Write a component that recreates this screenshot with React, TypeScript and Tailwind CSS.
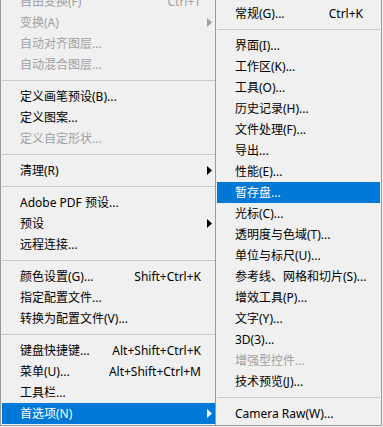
type Item = {
	label?: string;
	shortcut?: string;
	arrow?: boolean;
	disabled?: boolean;
	active?: boolean;
	sep?: boolean;
};

const leftItems: Array<Item> = [
	{ label: "自由变换(F)", shortcut: "Ctrl+T", disabled: true },
	{ label: "变换(A)", arrow: true, disabled: true },
	{ label: "自动对齐图层...", disabled: true },
	{ label: "自动混合图层...", disabled: true },
	{ sep: true },
	{ label: "定义画笔预设(B)..." },
	{ label: "定义图案..." },
	{ label: "定义自定形状...", disabled: true },
	{ sep: true },
	{ label: "清理(R)", arrow: true },
	{ sep: true },
	{ label: "Adobe PDF 预设..." },
	{ label: "预设", arrow: true },
	{ label: "远程连接..." },
	{ sep: true },
	{ label: "颜色设置(G)...", shortcut: "Shift+Ctrl+K" },
	{ label: "指定配置文件..." },
	{ label: "转换为配置文件(V)..." },
	{ sep: true },
	{ label: "键盘快捷键...", shortcut: "Alt+Shift+Ctrl+K" },
	{ label: "菜单(U)...", shortcut: "Alt+Shift+Ctrl+M" },
	{ label: "工具栏..." },
	{ label: "首选项(N)", arrow: true, active: true },
];

const subItems: Array<Item> = [
	{ label: "常规(G)...", shortcut: "Ctrl+K" },
	{ sep: true },
	{ label: "界面(I)..." },
	{ label: "工作区(K)..." },
	{ label: "工具(O)..." },
	{ label: "历史记录(H)..." },
	{ label: "文件处理(F)..." },
	{ label: "导出..." },
	{ label: "性能(E)..." },
	{ label: "暂存盘...", active: true },
	{ label: "光标(C)..." },
	{ label: "透明度与色域(T)..." },
	{ label: "单位与标尺(U)..." },
	{ label: "参考线、网格和切片(S)..." },
	{ label: "增效工具(P)..." },
	{ label: "文字(Y)..." },
	{ label: "3D(3)..." },
	{ label: "增强型控件...", disabled: true },
	{ label: "技术预览(J)..." },
	{ sep: true },
	{ label: "Camera Raw(W)..." },
];

const Arrow = ({ color }: { color: string }) => (
	<svg width="5" height="9" viewBox="0 0 5 9">
		<path d="M0 0 L5 4.5 L0 9 Z" fill={color} />
	</svg>
);

const MenuRow = ({ item, slot }: { item: Item; slot: string }) => {
	if (item.sep) {
		return (
			<div className="h-[11px] flex items-center">
				<div className="h-px w-full bg-[#c8c8c8]" />
			</div>
		);
	}
	const color = item.active
		? "text-white"
		: item.disabled
			? "text-[#a0a0a0]"
			: "text-black";
	return (
		<div
			className={`h-[21px] flex items-center pl-[18px] pr-[3px] whitespace-nowrap ${color} ${
				item.active ? "bg-[#0078d7]" : ""
			}`}
		>
			<span className="flex-1">{item.label}</span>
			{item.shortcut && <span>{item.shortcut}</span>}
			<span className={`${slot} flex justify-end`}>
				{item.arrow && (
					<Arrow color={item.active ? "#ffffff" : item.disabled ? "#a0a0a0" : "#000000"} />
				)}
			</span>
		</div>
	);
};

export default function App() {
	return (
		<div
			className="w-[383px] h-[427px] overflow-hidden flex items-start bg-[#f0f0f0] text-[12px]"
			style={{ fontFamily: '"Noto Sans", "Noto Sans CJK SC", sans-serif' }}
		>
			<div className="w-[215px] -mt-[9px] flex flex-col border-l border-b border-[#999999] pl-px pb-px">
				{leftItems.map((item, i) => (
					<MenuRow key={i} item={item} slot="w-[11px]" />
				))}
			</div>
			<div className="w-[167px] flex flex-col border-x border-b border-[#999999] pt-[3px] px-px pb-px">
				{subItems.map((item, i) => (
					<MenuRow key={i} item={item} slot="w-[14px]" />
				))}
			</div>
		</div>
	);
}
